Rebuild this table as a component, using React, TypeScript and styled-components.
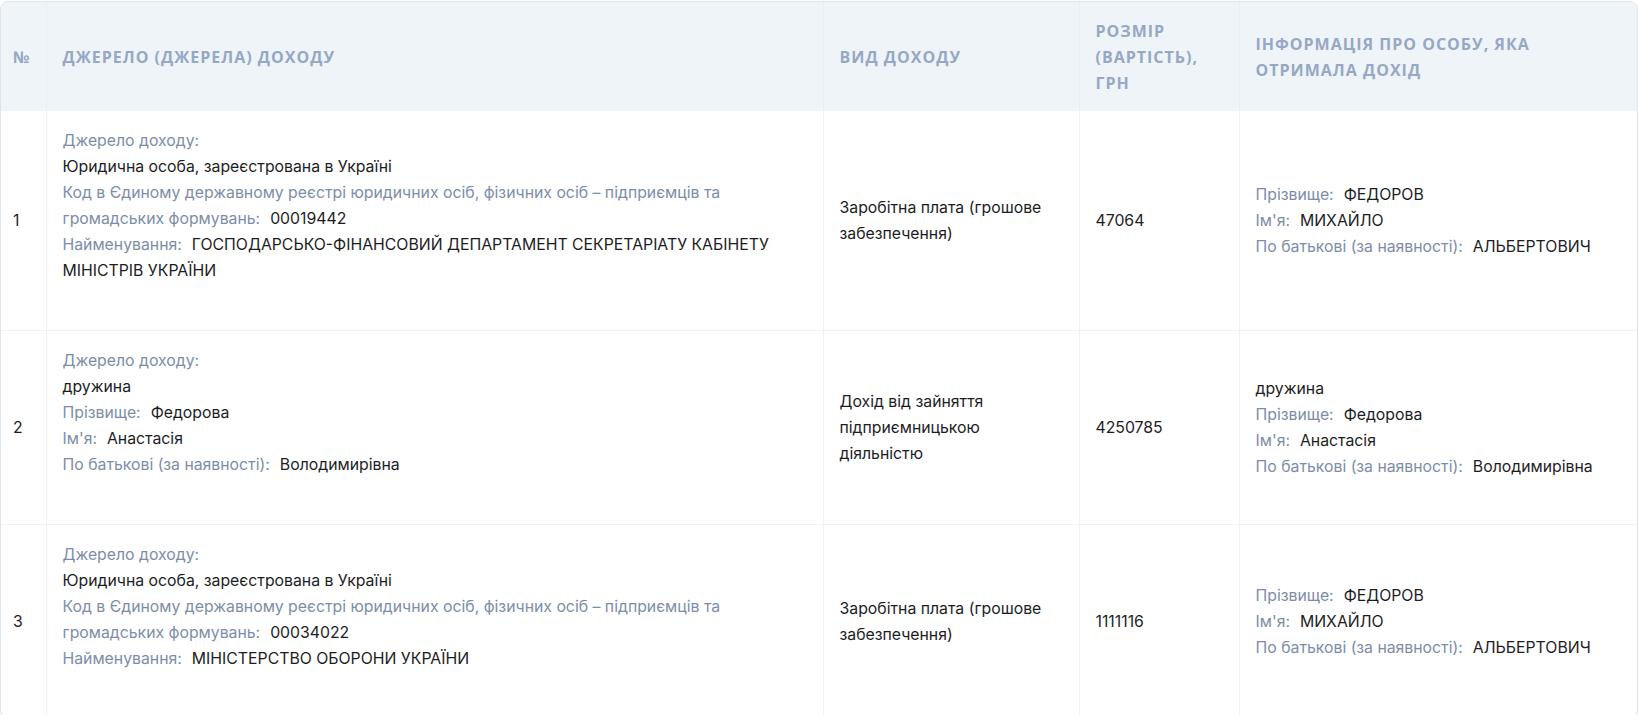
import styled, { createGlobalStyle } from 'styled-components';

const GlobalStyle = createGlobalStyle`
  html, body {
    margin: 0;
    padding: 0;
    background: #ffffff;
  }
  body {
    font-family: Inter, "Noto Sans", sans-serif;
    color: #1d1d1f;
  }
`;

/* ===== styled ===== */
const Wrap = styled.div`
  width: 1638px;
  box-sizing: border-box;
  border: 1px solid #dfe4ea;
  border-radius: 8px;
  overflow: hidden;
  margin-top: 1px;
`;
const Table = styled.table`
  width: 100%;
  border-collapse: collapse;
  table-layout: fixed;
`;
const Col = styled.col<{ $w: number }>`
  width: ${({ $w }) => $w}px;
`;
const HeadRow = styled.tr`
  background: #eff4f9;
`;
const Th = styled.th<{ $first?: boolean }>`
  box-sizing: border-box;
  padding: 16px ${({ $first }) => ($first ? '8px' : '20px')} 15px ${({ $first }) => ($first ? '12px' : '16px')};
  text-align: left;
  vertical-align: middle;
  font-family: "Open Sans", "Noto Sans", sans-serif;
  font-weight: 700;
  font-size: 16px;
  line-height: 26px;
  letter-spacing: 1px;
  text-transform: uppercase;
  color: #96a8c4;
  border-left: 1px solid #e9eff6;
  &:first-child {
    border-left: none;
  }
`;
const Row = styled.tr`
  border-top: 1px solid #eef1f5;
  &:first-child {
    border-top: none;
  }
`;
const Td = styled.td<{ $first?: boolean; $source?: boolean }>`
  box-sizing: border-box;
  padding: ${({ $source }) => ($source ? '17px 16px 46px' : '16px')};
  padding-left: ${({ $first }) => ($first ? '12px' : '16px')};
  vertical-align: middle;
  font-size: 15.8px;
  line-height: 26px;
  color: #1d1d1f;
  border-left: 1px solid #f0f2f5;
  &:first-child {
    border-left: none;
  }
`;
const Line = styled.div``;
const Label = styled.span`
  color: #7d8da8;
  margin-right: 10px;
`;
const Value = styled.span`
  color: #1d1d1f;
`;

/* ===== data ===== */
type Field = { label?: string; value?: string };
type Entry = {
  n: number;
  source: Field[];
  kind: string;
  amount: string;
  person: Field[];
};

const legal = (code: string, name: string): Field[] => [
  { label: 'Джерело доходу:' },
  { value: 'Юридична особа, зареєстрована в Україні' },
  {
    label: 'Код в Єдиному державному реєстрі юридичних осіб, фізичних осіб – підприємців та громадських формувань:',
    value: code,
  },
  { label: 'Найменування:', value: name },
];

const fedorov: Field[] = [
  { label: 'Прізвище:', value: 'ФЕДОРОВ' },
  { label: "Ім'я:", value: 'МИХАЙЛО' },
  { label: 'По батькові (за наявності):', value: 'АЛЬБЕРТОВИЧ' },
];

const wife: Field[] = [
  { value: 'дружина' },
  { label: 'Прізвище:', value: 'Федорова' },
  { label: "Ім'я:", value: 'Анастасія' },
  { label: 'По батькові (за наявності):', value: 'Володимирівна' },
];

const rows: Entry[] = [
  {
    n: 1,
    source: legal('00019442', 'ГОСПОДАРСЬКО-ФІНАНСОВИЙ ДЕПАРТАМЕНТ СЕКРЕТАРІАТУ КАБІНЕТУ МІНІСТРІВ УКРАЇНИ'),
    kind: 'Заробітна плата (грошове забезпечення)',
    amount: '47064',
    person: fedorov,
  },
  {
    n: 2,
    source: [{ label: 'Джерело доходу:' }, ...wife],
    kind: 'Дохід від зайняття підприємницькою діяльністю',
    amount: '4250785',
    person: wife,
  },
  {
    n: 3,
    source: legal('00034022', 'МІНІСТЕРСТВО ОБОРОНИ УКРАЇНИ'),
    kind: 'Заробітна плата (грошове забезпечення)',
    amount: '1111116',
    person: fedorov,
  },
];

const Fields = ({ items }: { items: Field[] }) => (
  <>
    {items.map((f, i) => (
      <Line key={i}>
        {f.label && <Label>{f.label}</Label>}
        {f.value && <Value>{f.value}</Value>}
      </Line>
    ))}
  </>
);

/* ===== component ===== */
export default function App() {
  return (
    <>
      <GlobalStyle />
      <Wrap>
        <Table>
          <colgroup>
            <Col $w={45} />
            <Col $w={777} />
            <Col $w={256} />
            <Col $w={160} />
            <Col $w={398} />
          </colgroup>
          <thead>
            <HeadRow>
              <Th $first>№</Th>
              <Th>Джерело (джерела) доходу</Th>
              <Th>Вид доходу</Th>
              <Th>Розмір (вартість), грн</Th>
              <Th>Інформація про особу, яка отримала дохід</Th>
            </HeadRow>
          </thead>
          <tbody>
            {rows.map((r) => (
              <Row key={r.n}>
                <Td $first>{r.n}</Td>
                <Td $source>
                  <Fields items={r.source} />
                </Td>
                <Td>{r.kind}</Td>
                <Td>{r.amount}</Td>
                <Td>
                  <Fields items={r.person} />
                </Td>
              </Row>
            ))}
          </tbody>
        </Table>
      </Wrap>
    </>
  );
}
